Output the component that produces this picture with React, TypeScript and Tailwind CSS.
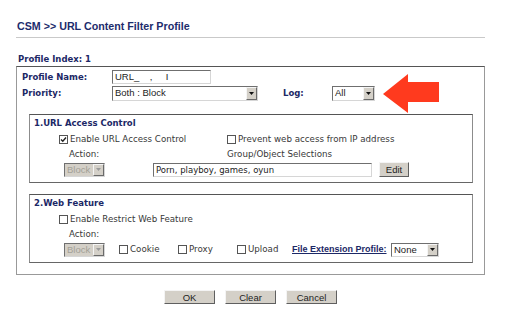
import type { ReactNode } from 'react';

const arial = "font-['Liberation_Sans',Arial,sans-serif]";

function Sel({ className, value, disabled }: { className: string; value: string; disabled?: boolean }) {
  return (
    <div
      className={`flex items-stretch border border-[#6f6f6f] border-r-[#d6d6d6] border-b-[#d6d6d6] ${
        disabled ? 'bg-[#d4d0c8]' : 'bg-white'
      } ${className}`}
    >
      <span
        className={`flex-1 pl-[2px] text-[9.5px] leading-[12px] ${arial} ${
          disabled ? 'text-[#a3a096]' : 'text-[#222]'
        }`}
      >
        {value}
      </span>
      <span className="w-[11px] bg-[#d4d0c8] border border-[#f5f5f5] border-r-[#6a6a6a] border-b-[#6a6a6a] flex items-center justify-center">
        <svg width="5" height="3" viewBox="0 0 5 3">
          <path d="M0 0h5L2.5 3z" fill={disabled ? '#9a9a9a' : '#111'} />
        </svg>
      </span>
    </div>
  );
}

function Check({ checked, children, className }: { checked?: boolean; children: ReactNode; className: string }) {
  return (
    <span className={`flex items-center ${className}`}>
      <span className="w-[9px] h-[9px] border border-[#555] bg-white flex items-center justify-center">
        {checked && (
          <svg width="7" height="7" viewBox="0 0 7 7">
            <path d="M1 3.5l1.8 1.8L6 1.5" stroke="#222" strokeWidth="1.4" fill="none" />
          </svg>
        )}
      </span>
      <span className="ml-[2px]">{children}</span>
    </span>
  );
}

function Btn({ className, children }: { className: string; children: ReactNode }) {
  return (
    <button
      className={`bg-[#d4d0c8] border border-[#f4f4f4] border-r-[#5f5f5f] border-b-[#5f5f5f] text-[9.5px] leading-[11px] text-[#222] ${arial} ${className}`}
    >
      {children}
    </button>
  );
}

const boxCls = 'ml-[12px] w-[444px] border border-[#8c8c8c] border-t-[#555] border-b-[#666] pb-[5px]';
const heading = 'h-[17px] flex items-center pl-[4px] text-[8.5px] font-bold text-[#1c2866]';

export default function App() {
  return (
    <div className="relative w-[508px] h-[327px] bg-white overflow-hidden font-['DejaVu_Sans',Verdana,sans-serif] text-[8.7px] text-[#383838]">
      <div className="pl-[16px] pt-[20px]">
        <div className="w-[469px] h-[18px] border-b border-[#c9c9c9]">
          <h1 className={`pl-[1px] text-[10.7px] leading-[13px] font-bold text-[#1d2c6c] ${arial}`}>
            CSM &gt;&gt; URL Content Filter Profile
          </h1>
        </div>
        <div className="mt-[15px] h-[12px] pl-[2px] text-[8.5px] leading-[12px] font-bold text-[#1c2866]">
          Profile Index: 1
        </div>

        <div className="mt-[1px] w-[469px] border border-[#999] border-t-[#555] pt-[3px] pb-[11px]">
          <div className="flex items-center h-[14px]">
            <span className="w-[95px] pl-[5px] text-[8.5px] font-bold text-[#1c2866]">Profile Name:</span>
            <div className={`w-[99px] h-[14px] border border-[#6f6f6f] border-r-[#d6d6d6] border-b-[#d6d6d6] pl-[2px] text-[9.5px] leading-[12px] text-[#222] ${arial}`}>
              URL_&nbsp;&nbsp;&nbsp;&nbsp;,&nbsp;&nbsp;&nbsp;&nbsp;&nbsp;I
            </div>
          </div>
          <div className="mt-[2px] flex items-center h-[15px]">
            <span className="w-[95px] pl-[5px] text-[8.5px] font-bold text-[#1c2866]">Priority:</span>
            <Sel className="w-[146px] h-[15px]" value="Both : Block" />
            <span className="ml-[25px] w-[49px] text-[8.5px] font-bold text-[#1c2866]">Log:</span>
            <Sel className="w-[43px] h-[15px]" value="All" />
          </div>

          <div className={`mt-[13px] ${boxCls}`}>
            <div className={heading}>1.URL Access Control</div>
            <div className="h-[16px] flex items-center">
              <Check checked className="ml-[29px] w-[168px]">Enable URL Access Control</Check>
              <Check className="">Prevent web access from IP address</Check>
            </div>
            <div className="h-[14px] flex items-center">
              <span className="ml-[39px] w-[158px]">Action:</span>
              <span>Group/Object Selections</span>
            </div>
            <div className="h-[15px] flex items-center">
              <Sel className="ml-[34px] w-[41px] h-[14px]" value="Block" disabled />
              <div className="ml-[48px] w-[219px] h-[14px] border border-[#6f6f6f] border-r-[#d6d6d6] border-b-[#d6d6d6] pl-[2px] text-[8.5px] leading-[12px] text-[#222]">
                Porn, playboy, games, oyun
              </div>
              <Btn className="ml-[7px] w-[30px] h-[15px]">Edit</Btn>
            </div>
          </div>

          <div className={`mt-[11px] ${boxCls}`}>
            <div className={heading}>2.Web Feature</div>
            <div className="h-[16px] flex items-center">
              <Check className="ml-[29px]">Enable Restrict Web Feature</Check>
            </div>
            <div className="h-[14px] flex items-center">
              <span className="ml-[39px]">Action:</span>
            </div>
            <div className="h-[15px] flex items-center">
              <Sel className="ml-[34px] w-[41px] h-[14px]" value="Block" disabled />
              <Check className="ml-[14px] w-[59px]">Cookie</Check>
              <Check className="w-[59px]">Proxy</Check>
              <Check className="w-[55px]">Upload</Check>
              <span className={`w-[99px] text-[9px] font-bold underline text-[#1c2866] ${arial}`}>
                File Extension Profile:
              </span>
              <Sel className="w-[48px] h-[14px]" value="None" />
            </div>
          </div>
        </div>

        <div className="mt-[15px] w-[469px] flex justify-center gap-[10px]">
          <Btn className="w-[51px] h-[14px]">OK</Btn>
          <Btn className="w-[51px] h-[14px]">Clear</Btn>
          <Btn className="w-[51px] h-[14px]">Cancel</Btn>
        </div>
      </div>

      {/* red annotation arrow */}
      <svg className="absolute left-[380px] top-[72px]" width="62" height="44" viewBox="0 0 62 44">
        <path d="M3 22L28 2V10H59V30H28V41Z" fill="#ff3a1e" />
      </svg>
    </div>
  );
}
